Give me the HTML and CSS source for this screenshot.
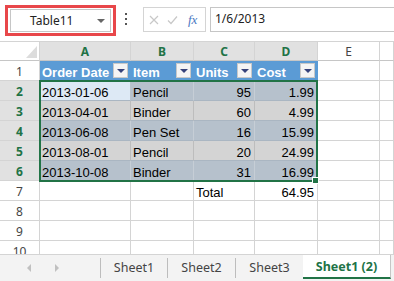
FILE: index.html
```html
<!DOCTYPE html>
<html lang="en">
<head>
    <meta charset="UTF-8">
    <title>Table11</title>
    <link rel="stylesheet" href="styles.css">
</head>
<body>

<div class="app">
    <!-- Formula bar -->
    <div class="formula-bar">
        <div class="name-outline">
            <div class="name-box">
                <span class="name-text">Table11</span>
                <span class="caret"></span>
            </div>
        </div>
        <div class="more"><i></i><i></i><i></i></div>
        <div class="fx-box">
            <svg width="10" height="10" viewBox="0 0 10 10"><path d="M1 1L9 9M9 1L1 9" stroke="#c8c8c8" stroke-width="1.2" fill="none"/></svg>
            <svg width="11" height="10" viewBox="0 0 11 10"><path d="M1 5.5L4 8.5L10 1.5" stroke="#c8c8c8" stroke-width="1.2" fill="none"/></svg>
            <span class="fx">fx</span>
        </div>
        <div class="formula-input">1/6/2013</div>
    </div>

    <!-- Grid -->
    <div class="sheet">
        <div class="corner"><span class="corner-tri"></span></div>
        <div class="ch sel">A</div>
        <div class="ch sel">B</div>
        <div class="ch sel">C</div>
        <div class="ch sel">D</div>
        <div class="ch">E</div>
        <div class="ch"></div>

        <div class="rh">1</div>
        <div class="cell th">Order Date<span class="filter"></span></div>
        <div class="cell th">Item<span class="filter"></span></div>
        <div class="cell th">Units<span class="filter"></span></div>
        <div class="cell th">Cost<span class="filter"></span></div>
        <div class="cell"></div>
        <div class="cell"></div>

        <div class="rh sel">2</div>
        <div class="cell active">2013-01-06
            <div class="selection"><span class="handle"></span></div>
        </div>
        <div class="cell dark">Pencil</div>
        <div class="cell dark num">95</div>
        <div class="cell dark num">1.99</div>
        <div class="cell"></div>
        <div class="cell"></div>

        <div class="rh sel">3</div>
        <div class="cell light">2013-04-01</div>
        <div class="cell light">Binder</div>
        <div class="cell light num">60</div>
        <div class="cell light num">4.99</div>
        <div class="cell"></div>
        <div class="cell"></div>

        <div class="rh sel">4</div>
        <div class="cell dark">2013-06-08</div>
        <div class="cell dark">Pen Set</div>
        <div class="cell dark num">16</div>
        <div class="cell dark num">15.99</div>
        <div class="cell"></div>
        <div class="cell"></div>

        <div class="rh sel">5</div>
        <div class="cell light">2013-08-01</div>
        <div class="cell light">Pencil</div>
        <div class="cell light num">20</div>
        <div class="cell light num">24.99</div>
        <div class="cell"></div>
        <div class="cell"></div>

        <div class="rh sel">6</div>
        <div class="cell dark">2013-10-08</div>
        <div class="cell dark">Binder</div>
        <div class="cell dark num">31</div>
        <div class="cell dark num">16.99</div>
        <div class="cell"></div>
        <div class="cell"></div>

        <div class="rh">7</div>
        <div class="cell"></div>
        <div class="cell"></div>
        <div class="cell">Total</div>
        <div class="cell num">64.95</div>
        <div class="cell"></div>
        <div class="cell"></div>

        <div class="rh">8</div>
        <div class="cell"></div><div class="cell"></div><div class="cell"></div>
        <div class="cell"></div><div class="cell"></div><div class="cell"></div>

        <div class="rh">9</div>
        <div class="cell"></div><div class="cell"></div><div class="cell"></div>
        <div class="cell"></div><div class="cell"></div><div class="cell"></div>

        <div class="rh">10</div>
        <div class="cell"></div><div class="cell"></div><div class="cell"></div>
        <div class="cell"></div><div class="cell"></div><div class="cell"></div>
    </div>

    <!-- Sheet tabs -->
    <div class="tabs">
        <div class="nav">
            <span class="arrow left"></span>
            <span class="arrow right"></span>
        </div>
        <span class="sep"></span>
        <div class="tab t1">Sheet1</div>
        <span class="sep"></span>
        <div class="tab t2">Sheet2</div>
        <span class="sep"></span>
        <div class="tab t3">Sheet3</div>
        <div class="tab current">Sheet1 (2)</div>
    </div>
</div>

</body>
</html>
```

FILE: styles.css
```css
body {
    margin: 0;
    font-family: "Noto Sans", sans-serif;
    background-color: #ffffff;
    overflow: hidden;
}
.app {
    width: 394px;
    height: 281px;
    display: flex;
    flex-direction: column;
}

/* formula bar */
.formula-bar {
    height: 41px;
    flex-shrink: 0;
    display: flex;
    align-items: flex-start;
}
.name-outline {
    margin: 5px 0 0 5px;
    width: 111px;
    height: 31px;
    border: 3px solid #e8474a;
    box-sizing: border-box;
    padding: 1px 2px;
}
.name-box {
    height: 23px;
    border: 1px solid #c6c6c6;
    box-sizing: border-box;
    display: flex;
    align-items: center;
    padding: 0 5px 0 19px;
    font-size: 12px;
    color: #222;
}
.name-text {
    line-height: 21px;
}
.caret {
    margin-left: auto;
    width: 0;
    height: 0;
    border-left: 4px solid transparent;
    border-right: 4px solid transparent;
    border-top: 4px solid #666;
}
.more {
    width: 10px;
    margin: 13px 0 0 5px;
    display: flex;
    flex-direction: column;
    align-items: center;
    gap: 3px;
}
.more i {
    width: 2px;
    height: 2px;
    background-color: #555;
}
.fx-box {
    margin: 7px 0 0 12px;
    width: 63px;
    height: 25px;
    border: 1px solid #d4d4d4;
    box-sizing: border-box;
    display: flex;
    align-items: center;
    gap: 8px;
    padding-left: 5px;
}
.fx {
    font-family: "Liberation Serif", serif;
    font-style: italic;
    font-size: 13px;
    color: #4a78c2;
    margin-left: 2px;
}
.formula-input {
    margin: 7px 0 0 4px;
    flex: 1;
    height: 25px;
    border: 1px solid #c6c6c6;
    border-right: none;
    box-sizing: border-box;
    padding-left: 4px;
    font-size: 12px;
    line-height: 22px;
    color: #222;
}

/* grid */
.sheet {
    height: 213px;
    flex-shrink: 0;
    box-sizing: border-box;
    border-top: 1px solid #d4d4d4;
    overflow: hidden;
    display: grid;
    grid-template-columns: 40px 91px 63px 61px 63px 62px 1fr;
    grid-template-rows: 19px repeat(10, 20px);
}
.corner, .ch, .rh, .cell {
    box-sizing: border-box;
    border-right: 1px solid #d4d4d4;
    border-bottom: 1px solid #d4d4d4;
    white-space: nowrap;
    overflow: hidden;
}
.corner {
    display: flex;
    align-items: flex-end;
    justify-content: flex-end;
    padding: 0 2px 2px 0;
    border-bottom-color: #c6c6c6;
}
.corner-tri {
    width: 0;
    height: 0;
    border-left: 11px solid transparent;
    border-bottom: 12px solid #dcdcdc;
}
.ch {
    font-size: 12px;
    line-height: 15px;
    padding-top: 2px;
    text-align: center;
    color: #444;
    border-bottom-color: #c6c6c6;
}
.ch.sel {
    background-color: #e1e1e1;
    color: #217346;
    font-weight: bold;
}
.rh {
    font-size: 12px;
    line-height: 15px;
    padding-top: 3px;
    text-align: center;
    color: #444;
}
.rh.sel {
    background-color: #e1e1e1;
    color: #217346;
    font-weight: bold;
}
.cell {
    font-family: "Liberation Sans", Arial, sans-serif;
    font-size: 13px;
    line-height: 15px;
    padding: 4px 2px 0 2px;
    color: #000;
}
.num {
    text-align: right;
    padding-right: 3px;
}
.th {
    background-color: #5b9bd5;
    border-right-color: #5b9bd5;
    border-bottom-color: #5b9bd5;
    color: #ffffff;
    font-weight: bold;
    display: flex;
    align-items: flex-start;
}
.filter {
    margin: -2px 0 0 auto;
    width: 15px;
    height: 15px;
    box-sizing: border-box;
    background-color: #f4f4f4;
    border: 1px solid #c8c8c8;
    display: flex;
    align-items: center;
    justify-content: center;
}
.filter::after {
    content: "";
    width: 0;
    height: 0;
    border-left: 4px solid transparent;
    border-right: 4px solid transparent;
    border-top: 4px solid #36427a;
}
.active {
    background-color: #dde9f5;
    border-right-color: #b9c3cc;
    border-bottom-color: #aab6c2;
    position: relative;
    overflow: visible;
}
.dark {
    background-color: #b6c1cc;
    border-right-color: #c6ced6;
    border-bottom-color: #aab6c2;
}
.light {
    background-color: #d4d4d4;
    border-right-color: #bdbdbd;
    border-bottom-color: #aab6c2;
}
.selection {
    position: absolute;
    left: -1px;
    top: -1px;
    width: 279px;
    height: 102px;
    box-sizing: border-box;
    border: 2px solid #217346;
    z-index: 2;
}
.handle {
    position: absolute;
    right: -3px;
    bottom: -4px;
    width: 5px;
    height: 5px;
    background-color: #217346;
    border: 1px solid #ffffff;
}

/* sheet tabs */
.tabs {
    flex: 1;
    box-sizing: border-box;
    border-top: 1px solid #d4d4d4;
    background-color: #f3f3f3;
    display: flex;
    align-items: flex-start;
    font-size: 12.5px;
    color: #444;
}
.nav {
    width: 100px;
    height: 26px;
    display: flex;
    align-items: center;
    gap: 24px;
    padding-left: 27px;
    box-sizing: border-box;
}
.arrow {
    width: 0;
    height: 0;
    border-top: 4px solid transparent;
    border-bottom: 4px solid transparent;
}
.arrow.left {
    border-right: 4px solid #c0c0c0;
}
.arrow.right {
    border-left: 4px solid #c0c0c0;
}
.sep {
    width: 1px;
    height: 20px;
    margin-top: 3px;
    background-color: #bdbdbd;
}
.tab {
    height: 24px;
    display: flex;
    align-items: center;
    justify-content: center;
    padding-top: 1px;
    box-sizing: border-box;
}
.t1 {
    width: 66px;
}
.t2 {
    width: 67px;
}
.t3 {
    width: 67px;
}
.tab.current {
    width: 88px;
    background-color: #ffffff;
    border-right: 1px solid #c6c6c6;
    border-bottom: 2px solid #217346;
    color: #217346;
    font-weight: bold;
}
```
